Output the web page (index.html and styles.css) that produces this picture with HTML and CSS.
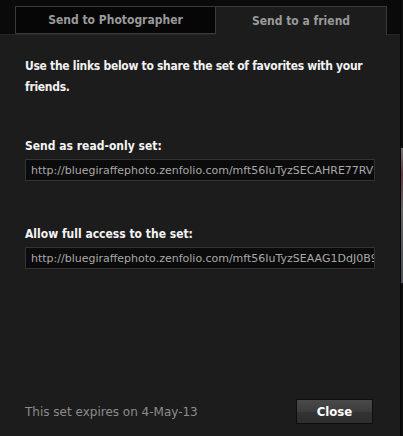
FILE: index.html
```html
<!DOCTYPE html>
<html>
<head>
<meta charset="utf-8">
<link rel="stylesheet" href="styles.css">
</head>
<body>
<div class="frame">
  <div class="dialog">
    <div class="tabs">
      <div class="tab tab-inactive">Send to Photographer</div>
      <div class="tab tab-active">Send to a friend</div>
    </div>
    <div class="panel">
      <p class="intro">Use the links below to share the set of favorites with your friends.</p>
      <div class="field">
        <div class="label">Send as read-only set:</div>
        <input class="input" type="text" readonly value="http://bluegiraffephoto.zenfolio.com/mft56IuTyzSECAHRE77RV3kEx">
      </div>
      <div class="field">
        <div class="label">Allow full access to the set:</div>
        <input class="input" type="text" readonly value="http://bluegiraffephoto.zenfolio.com/mft56IuTyzSEAAG1DdJ0B9kqW">
      </div>
      <div class="spacer"></div>
      <div class="footer">
        <span class="expires">This set expires on 4-May-13</span>
        <button class="close">Close</button>
      </div>
    </div>
  </div>
  <div class="edge"><div class="edge-light"></div></div>
</div>
</body>
</html>
```
FILE: styles.css
```css
html, body {
  margin: 0;
  padding: 0;
  background: #0b0b0b;
}
body {
  width: 403px;
  height: 436px;
  overflow: hidden;
  font-family: "DejaVu Sans Condensed", "DejaVu Sans", sans-serif;
}
.frame {
  display: flex;
  height: 436px;
}
.dialog {
  width: 400px;
  display: flex;
  flex-direction: column;
  background: #0a0a0a;
}
.tabs {
  display: flex;
  padding: 6px 0 0 15px;
  height: 28px;
  border-bottom: 1px solid #262626;
}
.tab {
  box-sizing: border-box;
  height: 29px;
  border: 1px solid #3a3a3a;
  border-bottom: none;
  font-size: 12px;
  font-weight: bold;
  color: #9a9a9a;
  display: flex;
  align-items: center;
  justify-content: center;
  padding-bottom: 1px;
}
.tab-inactive {
  width: 201px;
  background: #060606;
  height: 28px;
  border-bottom: 1px solid #3a3a3a;
}
.tab-active {
  width: 171px;
  background: #1c1c1c;
  border-left: none;
  margin-bottom: -1px;
}
.panel {
  flex: 1;
  background: #1c1c1c;
  padding: 21px 25px 12px 25px;
  display: flex;
  flex-direction: column;
}
.intro {
  margin: 0;
  color: #f2f2f2;
  font-size: 12px;
  font-weight: bold;
  line-height: 21px;
  letter-spacing: -0.3px;
}
.field {
  margin-top: 40px;
  display: flex;
  flex-direction: column;
}
.field + .field {
  margin-top: 45px;
}
.label {
  color: #f4f4f4;
  font-size: 12px;
  font-weight: bold;
  line-height: 16px;
}
.input {
  margin: 5px 0 0 0;
  box-sizing: border-box;
  width: 350px;
  height: 22px;
  background: #0b0b0b;
  border: 1px solid #333;
  border-radius: 0;
  color: #a8a8a8;
  font-family: "DejaVu Sans", sans-serif;
  font-size: 11px;
  line-height: 20px;
  padding: 0 0 0 5px;
  outline: none;
}
.spacer {
  flex: 1;
}
.footer {
  display: flex;
  align-items: center;
  justify-content: space-between;
  padding-right: 2px;
}
.expires {
  color: #8c8c8c;
  font-family: "DejaVu Sans", sans-serif;
  font-size: 12px;
}
.close {
  width: 77px;
  height: 25px;
  border: 1px solid #0e0e0e;
  background: linear-gradient(#4a4a4a, #3c3c3c 50%, #333 51%, #2e2e2e);
  color: #fff;
  font-family: inherit;
  font-size: 13px;
  font-weight: bold;
  padding: 0;
}
.edge {
  width: 3px;
  background: #0d0d0d;
  border-left: 1px solid #050505;
  box-sizing: border-box;
  padding-top: 148px;
}
.edge-light {
  height: 135px;
  background: linear-gradient(#777, #5a3a40 20%, #666 45%, #4a5055);
}
```
